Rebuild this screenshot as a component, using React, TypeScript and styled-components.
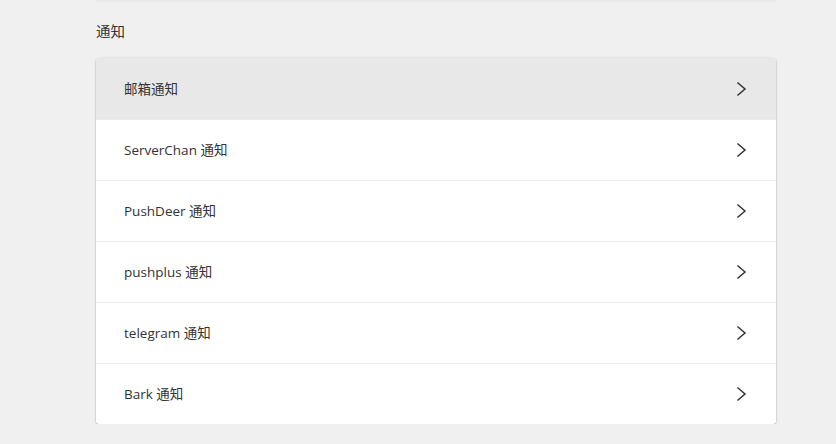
import React from "react";
import styled, { createGlobalStyle } from "styled-components";

const Global = createGlobalStyle`
  html, body { margin: 0; padding: 0; background: #f0f0f0; }
  body { font-family: "Open Sans", "Noto Sans CJK SC", sans-serif; color: rgba(0,0,0,0.87); }
`;

const Page = styled.div`
  width: 680px;
  margin: 0 auto 0 96px;
  display: flex;
  flex-direction: column;
`;

const PrevEdge = styled.div`
  height: 1px;
  background: #e9e9e9;
  box-shadow: 0 1px 1px rgba(0,0,0,0.03);
`;

const Title = styled.h2`
  margin: 0;
  padding: 21px 0 16px 0;
  font-size: 14.5px;
  font-weight: 400;
  line-height: 20px;
  color: #333;
`;

const Card = styled.div`
  background: #fff;
  border-radius: 4px;
  box-shadow: 0 1px 2px 0 rgba(0,0,0,0.3), 0 0 2px 0 rgba(0,0,0,0.08);
  overflow: hidden;
  display: flex;
  flex-direction: column;
`;

const Row = styled.div<{ $active?: boolean; $first?: boolean }>`
  height: 61px;
  box-sizing: border-box;
  display: flex;
  align-items: center;
  justify-content: space-between;
  padding: 0 28px;
  background: ${(p) => (p.$active ? "#e8e8e8" : "#fff")};
  border-top: ${(p) => (p.$first ? "none" : "1px solid #ececec")};
  font-size: 13.5px;
  color: #333;
  cursor: pointer;
`;

const Label = styled.span`
  line-height: 20px;
`;

const Chevron = () => (
  <svg width="12" height="16" viewBox="0 0 12 16" fill="none">
    <path d="M2 2 L9 8 L2 14" stroke="#333" strokeWidth="1.5" strokeLinecap="square" strokeLinejoin="miter" />
  </svg>
);

const items = ["邮箱通知", "ServerChan 通知", "PushDeer 通知", "pushplus 通知", "telegram 通知", "Bark 通知"];

export default function App() {
  return (
    <>
      <Global />
      <Page>
        <PrevEdge />
        <Title>通知</Title>
        <Card>
          {items.map((t, i) => (
            <Row key={t} $active={i === 0} $first={i === 0}>
              <Label>{t}</Label>
              <Chevron />
            </Row>
          ))}
        </Card>
      </Page>
    </>
  );
}
